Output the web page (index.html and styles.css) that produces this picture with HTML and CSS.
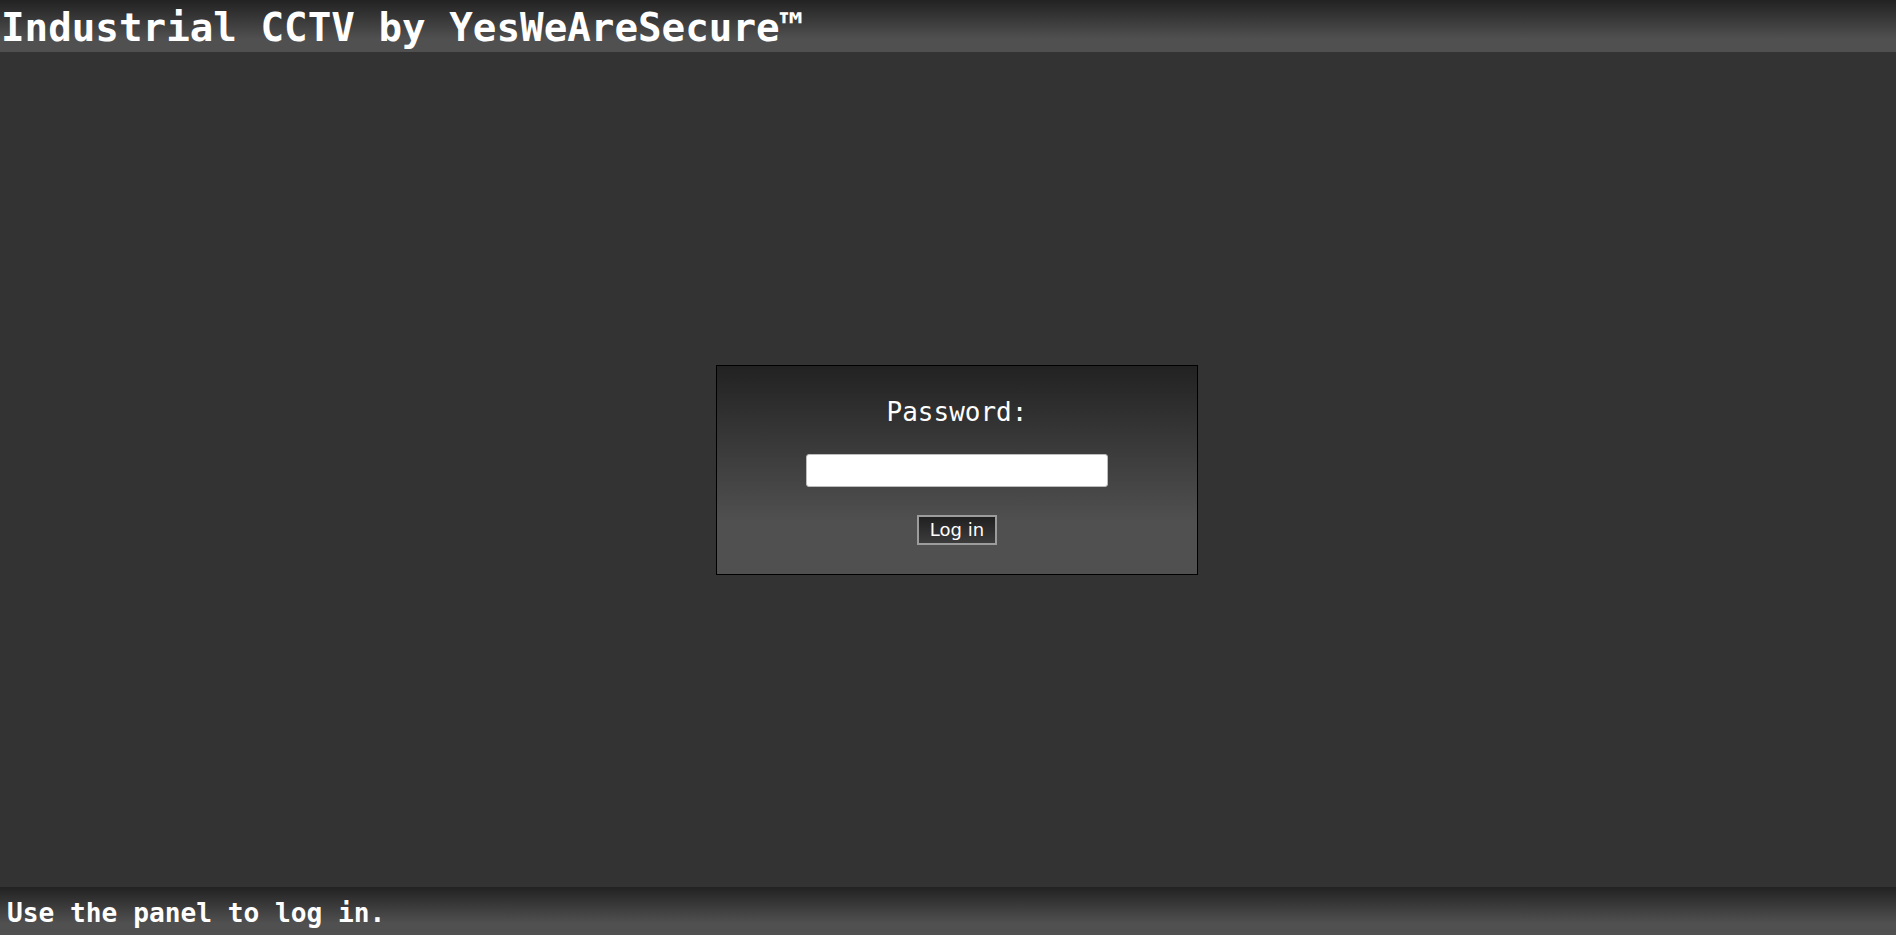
FILE: index.html
```html
<!DOCTYPE html>
<html lang="en">
<head>
<meta charset="utf-8">
<title>Industrial CCTV by YesWeAreSecure™</title>
<link rel="stylesheet" href="styles.css">
</head>
<body>
<header class="topbar">Industrial CCTV by YesWeAreSecure™</header>
<main class="stage">
  <form class="panel" onsubmit="return false">
    <label class="label" for="pw">Password:</label>
    <input class="field" id="pw" type="password">
    <button class="btn" type="submit">Log in</button>
  </form>
</main>
<footer class="status">Use the panel to log in.</footer>
</body>
</html>
```
FILE: styles.css
```css
html, body {
  margin: 0;
  padding: 0;
  height: 100%;
}
body {
  background: #333333;
  color: #ffffff;
  font-family: "DejaVu Sans Mono", monospace;
  display: flex;
  flex-direction: column;
  overflow: hidden;
}
.topbar {
  flex: 0 0 52px;
  box-sizing: border-box;
  height: 52px;
  padding: 5px 0 0 1px;
  font-size: 39.2px;
  line-height: 45px;
  font-weight: bold;
  white-space: nowrap;
  background: linear-gradient(#222222 0%, #505050 75%, #505050 100%);
}
.stage {
  flex: 1 1 auto;
  display: flex;
  align-items: center;
  justify-content: center;
  padding-left: 18px;
}
.panel {
  box-sizing: border-box;
  width: 482px;
  border: 1px solid #000000;
  padding: 29px 0 29px 0;
  display: flex;
  flex-direction: column;
  align-items: center;
  gap: 28px;
  background: linear-gradient(#222222 0%, #505050 75%, #505050 100%);
}
.label {
  font-size: 26px;
  line-height: 31px;
  height: 29px;
  padding-top: 2px;
  color: #ffffff;
}
.field {
  box-sizing: border-box;
  width: 302px;
  height: 33px;
  margin: 0;
  border: 1px solid #bdbdbd;
  border-radius: 3px;
  background: #ffffff;
  padding: 0 4px;
}
.btn {
  box-sizing: border-box;
  height: 30px;
  margin: 0;
  padding: 0 11px;
  border: 2px solid #9c9c9c;
  background: linear-gradient(#202020, #3c3c3c);
  color: #ffffff;
  font-family: "DejaVu Sans", sans-serif;
  font-size: 18px;
  line-height: 24px;
}
.status {
  flex: 0 0 48px;
  box-sizing: border-box;
  height: 48px;
  padding: 11px 0 0 7px;
  font-size: 26.2px;
  line-height: 30px;
  font-weight: bold;
  white-space: nowrap;
  background: linear-gradient(#222222 0%, #505050 75%, #505050 100%);
}
```
